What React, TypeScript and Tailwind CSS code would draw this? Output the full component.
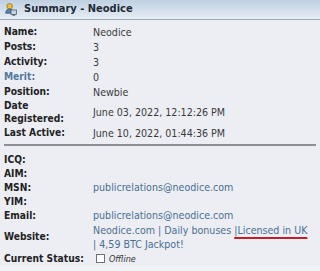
import React from "react";

const font = { fontFamily: '"DejaVu Sans Condensed", "DejaVu Sans", Verdana, sans-serif' };

function Row({ label, children, h = "h-[15px]", labelClass = "text-[#222]" }: { label: React.ReactNode; children?: React.ReactNode; h?: string; labelClass?: string }) {
  return (
    <div className={`grid grid-cols-[89px_1fr] items-center ${h}`}>
      <div className={`font-bold text-[10.2px] leading-[13px] ${labelClass}`}>{label}</div>
      <div className="text-[10.6px] leading-[14px] text-[#3a3a3a]">{children}</div>
    </div>
  );
}

function Link({ children }: { children: React.ReactNode }) {
  return <span className="text-[#4a6f92]">{children}</span>;
}

export default function App() {
  return (
    <div className="w-[320px] h-[271px] bg-[#f1f2f6] overflow-hidden" style={font}>
      <div className="h-[20px] bg-gradient-to-b from-[#bfd0e1] to-[#e6edf4] border-b border-[#a3aab2] flex items-center pl-[5px] gap-[7px]">
        <svg width="12" height="13" viewBox="0 0 13 14">
          <circle cx="5" cy="3.5" r="3" fill="#e8c23a" stroke="#8a6a10" strokeWidth="0.8" />
          <path d="M0.8 11 C0.8 7.5 2.5 6.6 5 6.6 C7.5 6.6 9.2 7.5 9.2 11 Z" fill="#5b7fb0" stroke="#2f4d78" strokeWidth="0.8" />
          <rect x="6.5" y="7.5" width="6" height="5" fill="#c9d3dd" stroke="#4a5560" strokeWidth="0.8" />
          <rect x="8" y="12.5" width="3" height="1.2" fill="#4a5560" />
        </svg>
        <span className="font-bold text-[11px] text-[#1e2a36]">Summary - Neodice</span>
      </div>
      <div className="bg-[#eceef4] pl-[4px] pr-[4px] pt-[4px] h-[246px]">
        <Row label="Name:">Neodice</Row>
        <Row label="Posts:">3</Row>
        <Row label="Activity:">3</Row>
        <Row label="Merit:" labelClass="text-[#56789c]">0</Row>
        <Row label="Position:">Newbie</Row>
        <Row label={<>Date<br />Registered:</>} h="h-[26px]">June 03, 2022, 12:12:26 PM</Row>
        <Row label="Last Active:">June 10, 2022, 01:44:36 PM</Row>
        <div className="mt-[4px] mb-[6px] h-[2px] bg-[#8d8f94]" />
        <Row label="ICQ:" h="h-[14px]" />
        <Row label="AIM:" h="h-[14px]" />
        <Row label="MSN:" h="h-[14px]"><Link>publicrelations@neodice.com</Link></Row>
        <Row label="YIM:" h="h-[14px]" />
        <Row label="Email:" h="h-[14px]"><Link>publicrelations@neodice.com</Link></Row>
        <Row label="Website:" h="h-[29px]">
          <Link>
            Neodice.com | Daily bonuses{" "}
            <span className="underline decoration-[#c41e2c] decoration-2 underline-offset-[3px]">|Licensed in UK</span>
            <br />| 4,59 BTC Jackpot!
          </Link>
        </Row>
        <Row label="Current Status:" h="h-[15px]">
          <span className="flex items-center gap-[4px]">
            <span className="inline-block w-[9px] h-[9px] border border-[#6e7278] bg-white ml-[3px]" />
            <span className="italic text-[9px] text-[#333]">Offline</span>
          </span>
        </Row>
      </div>
    </div>
  );
}
